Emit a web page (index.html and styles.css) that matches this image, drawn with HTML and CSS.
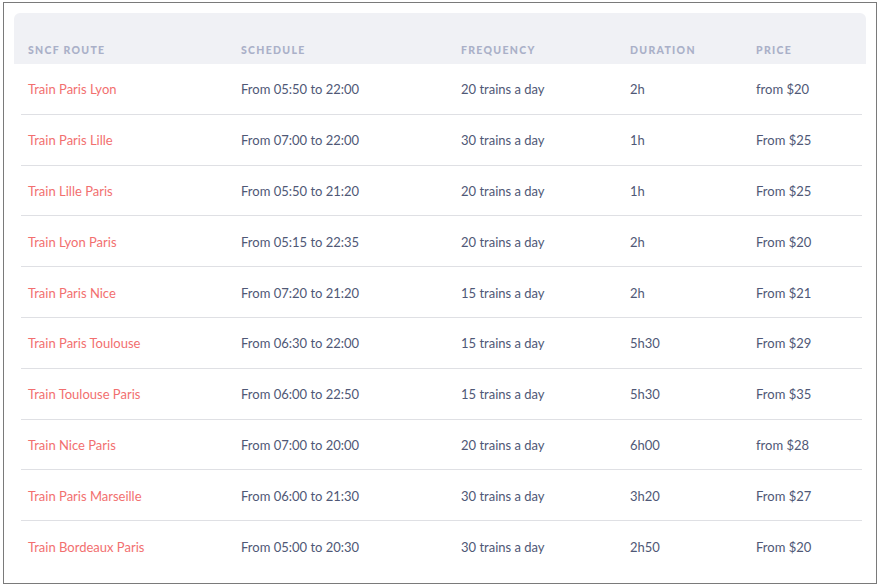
FILE: index.html
```html
<!DOCTYPE html>
<html>
<head>
<meta charset="utf-8">
<link rel="stylesheet" href="styles.css">
</head>
<body>
<div class="frame">
  <div class="table">
    <div class="row head">
      <div>SNCF Route</div><div>Schedule</div><div>Frequency</div><div>Duration</div><div>Price</div>
    </div>
    <div class="row"><div class="route">Train Paris Lyon</div><div>From 05:50 to 22:00</div><div>20 trains a day</div><div>2h</div><div>from $20</div></div>
    <div class="row"><div class="route">Train Paris Lille</div><div>From 07:00 to 22:00</div><div>30 trains a day</div><div>1h</div><div>From $25</div></div>
    <div class="row"><div class="route">Train Lille Paris</div><div>From 05:50 to 21:20</div><div>20 trains a day</div><div>1h</div><div>From $25</div></div>
    <div class="row"><div class="route">Train Lyon Paris</div><div>From 05:15 to 22:35</div><div>20 trains a day</div><div>2h</div><div>From $20</div></div>
    <div class="row"><div class="route">Train Paris Nice</div><div>From 07:20 to 21:20</div><div>15 trains a day</div><div>2h</div><div>From $21</div></div>
    <div class="row"><div class="route">Train Paris Toulouse</div><div>From 06:30 to 22:00</div><div>15 trains a day</div><div>5h30</div><div>From $29</div></div>
    <div class="row"><div class="route">Train Toulouse Paris</div><div>From 06:00 to 22:50</div><div>15 trains a day</div><div>5h30</div><div>From $35</div></div>
    <div class="row"><div class="route">Train Nice Paris</div><div>From 07:00 to 20:00</div><div>20 trains a day</div><div>6h00</div><div>from $28</div></div>
    <div class="row"><div class="route">Train Paris Marseille</div><div>From 06:00 to 21:30</div><div>30 trains a day</div><div>3h20</div><div>From $27</div></div>
    <div class="row last"><div class="route">Train Bordeaux Paris</div><div>From 05:00 to 20:30</div><div>30 trains a day</div><div>2h50</div><div>From $20</div></div>
  </div>
</div>
</body>
</html>
```

FILE: styles.css
```css
html, body {
  margin: 0;
  padding: 0;
  background: #fff;
}
.frame {
  margin: 2px 0 0 3px;
  width: 874px;
  height: 582px;
  border: 1px solid #7a7a7a;
  padding: 10px 9px 0 10px;
  box-sizing: border-box;
  font-family: "Lato", "Liberation Sans", sans-serif;
}
.table {
  width: 852px;
}
.row {
  display: grid;
  grid-template-columns: 213px 220px 169px 126px 1fr;
  align-items: center;
  height: 50.8px;
  padding-left: 14px;
  position: relative;
  font-size: 13px;
  color: #4f5876;
  box-sizing: border-box;
}
.row::after {
  content: "";
  position: absolute;
  left: 7px;
  right: 4px;
  bottom: 0;
  height: 1px;
  background: #dfe0e4;
}
.row.last::after,
.row.head::after {
  display: none;
}
.row.head {
  height: 51px;
  background: #f0f1f5;
  border-radius: 6px 6px 0 0;
  padding-top: 22px;
  font-size: 10.5px;
  font-weight: 900;
  letter-spacing: 1.3px;
  text-transform: uppercase;
  color: #aab0c8;
}
.route {
  color: #f26f6f;
}
```
